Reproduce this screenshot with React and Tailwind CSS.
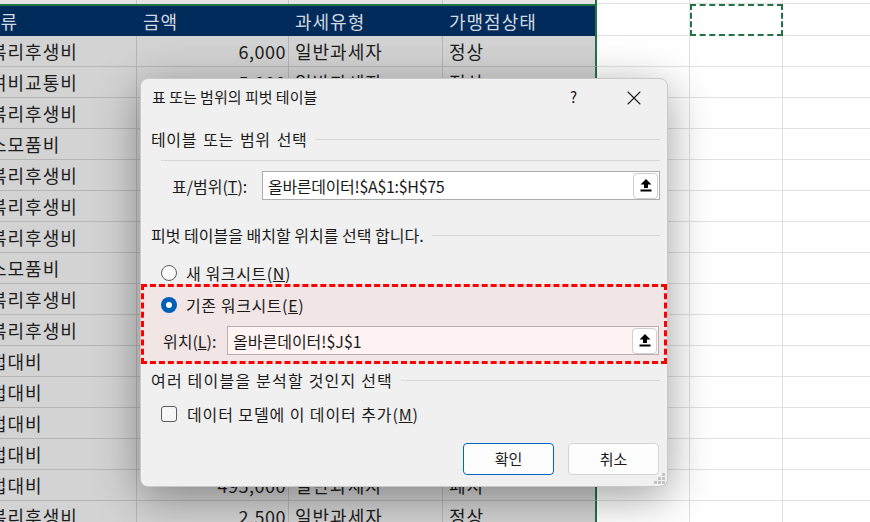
import React from "react";
import { X } from "lucide-react";

const font = "font-['Noto_Sans_CJK_KR','Noto_Sans',sans-serif]";

const rows = [
  ["복리후생비", "6,000", "일반과세자", "정상"],
  ["여비교통비", "5,000", "일반과세자", "정상"],
  ["복리후생비", "12,000", "일반과세자", "정상"],
  ["소모품비", "33,000", "일반과세자", "정상"],
  ["복리후생비", "8,500", "일반과세자", "정상"],
  ["복리후생비", "4,000", "일반과세자", "정상"],
  ["복리후생비", "15,000", "일반과세자", "정상"],
  ["소모품비", "27,500", "일반과세자", "정상"],
  ["복리후생비", "9,000", "일반과세자", "정상"],
  ["복리후생비", "6,500", "일반과세자", "정상"],
  ["접대비", "120,000", "일반과세자", "정상"],
  ["접대비", "88,000", "일반과세자", "정상"],
  ["접대비", "210,000", "일반과세자", "정상"],
  ["접대비", "150,000", "일반과세자", "정상"],
  ["접대비", "495,000", "일반과세자", "폐지"],
  ["복리후생비", "2,500", "일반과세자", "정상"],
];

function BlankCells({ h, dashed }) {
  return (
    <>
      <div className={`w-[93px] shrink-0 border-r border-b border-[#e1e1e1] bg-white ${h}`} />
      <div
        className={`w-[93px] shrink-0 bg-white ${h} ${
          dashed ? "border-2 border-dashed border-[#217346]" : "border-r border-b border-[#e1e1e1]"
        }`}
      />
      <div className={`w-[100px] shrink-0 border-r border-b border-[#e1e1e1] bg-white ${h}`} />
    </>
  );
}

function Sheet() {
  return (
    <div className={`flex flex-col -ml-[30px] text-[18px] tracking-[1px] text-[#1c1c1c] ${font}`}>
      {/* tail of the previous row */}
      <div className="flex h-[4px]">
        <div className="w-[167px] shrink-0 border-r border-[#c4c4c4] bg-[#e4e4e4]" />
        <div className="w-[152px] shrink-0 border-r border-[#c4c4c4] bg-[#e4e4e4]" />
        <div className="w-[154px] shrink-0 border-r border-[#c4c4c4] bg-[#e4e4e4]" />
        <div className="w-[154px] shrink-0 border-r-2 border-[#217346] bg-[#e4e4e4]" />
        <div className="w-[93px] shrink-0 border-r border-b border-[#e1e1e1] bg-white" />
        <div className="w-[93px] shrink-0 border-r border-b border-[#e1e1e1] bg-white" />
        <div className="w-[100px] shrink-0 border-r border-b border-[#e1e1e1] bg-white" />
      </div>
      {/* header */}
      <div className="flex h-[32px]">
        <div className="flex w-[627px] shrink-0 items-center border-t-2 border-r-2 border-[#217346] bg-[#002b5a] text-[#d4d9e1]">
          <div className="w-[167px] shrink-0 pl-[13px]">분류</div>
          <div className="w-[152px] shrink-0 pl-[6px]">금액</div>
          <div className="w-[154px] shrink-0 pl-[6px]">과세유형</div>
          <div className="w-[152px] shrink-0 pl-[6px]">가맹점상태</div>
        </div>
        <BlankCells h="h-[32px]" dashed />
      </div>
      {rows.map((r, i) => (
        <div key={i} className="flex h-[31px]">
          <div className="flex w-[167px] shrink-0 items-center border-r border-b border-[#b6b6b6] bg-[#d3d3d3] pl-[20px] whitespace-nowrap">
            {r[0]}
          </div>
          <div className="flex w-[152px] shrink-0 items-center justify-end border-r border-b border-[#b6b6b6] bg-[#d3d3d3] pr-[2px] tracking-[0.5px]">
            {r[1]}
          </div>
          <div className="flex w-[154px] shrink-0 items-center border-r border-b border-[#b6b6b6] bg-[#d3d3d3] pl-[6px] whitespace-nowrap">
            {r[2]}
          </div>
          <div className="flex w-[154px] shrink-0 items-center border-r-2 border-b border-r-[#217346] border-b-[#b6b6b6] bg-[#d3d3d3] pl-[6px]">
            {r[3]}
          </div>
          <BlankCells h="h-[31px]" />
        </div>
      ))}
    </div>
  );
}

function UploadButton() {
  return (
    <div className="flex h-[26px] w-[25px] items-center justify-center rounded-[4px] border border-[#cfcfcf] bg-white">
      <svg width="12" height="13" viewBox="0 0 12 13">
        <path d="M6 0 L11.5 5.5 L8 5.5 L8 9 L4 9 L4 5.5 L0.5 5.5 Z" fill="#000" />
        <rect x="0.5" y="10.5" width="11" height="2" fill="#000" />
      </svg>
    </div>
  );
}

function SectionHeader({ children, gap = "ml-[8px]" }) {
  return (
    <div className="flex h-[22px] items-center">
      <span className="pl-[10px] whitespace-nowrap">{children}</span>
      <div className={`${gap} h-px flex-1 bg-[#d6d6d6]`} />
    </div>
  );
}

function Radio({ checked }) {
  if (checked) {
    return (
      <div className="flex h-[16px] w-[16px] items-center justify-center rounded-full bg-[#005fb8]">
        <div className="h-[6px] w-[6px] rounded-full bg-white" />
      </div>
    );
  }
  return <div className="h-[16px] w-[16px] rounded-full border border-[#5c5c5c] bg-[#fafafa]" />;
}

function Dialog() {
  return (
    <div
      className={`absolute left-[140px] top-[78px] flex h-[409px] w-[528px] flex-col rounded-[8px] border border-[#c9c9c9] bg-[#f0f0f0] text-[16px] text-[#1a1a1a] shadow-[0_10px_45px_rgba(0,0,0,0.38)] ${font}`}
    >
      {/* title bar */}
      <div className="flex h-[37px] items-center">
        <span className="pl-[11px] text-[15px]">표 또는 범위의 피벗 테이블</span>
        <span className="ml-auto mr-[45px] text-[15px]">?</span>
        <X size={24} strokeWidth={1.1} className="mr-[21px] text-[#1a1a1a]" />
      </div>

      <div className="flex flex-col pr-[7px]">
        <div className="mt-[12px] tracking-[0.6px] [word-spacing:2px]">
          <SectionHeader>테이블 또는 범위 선택</SectionHeader>
        </div>
        <div className="ml-[20px] mt-[10px] h-px bg-[#d6d6d6]" />
        <div className="mt-[10px] flex h-[29px] items-center">
          <span className="w-[121px] pl-[31px] whitespace-nowrap">
            표/범위(<span className="underline">T</span>):
          </span>
          <div className="flex h-[29px] flex-1 items-center border border-[#adadad] bg-white pl-[5px] pr-[1px]">
            <span className="flex-1 tracking-[-0.3px]">올바른데이터!$A$1:$H$75</span>
            <UploadButton />
          </div>
        </div>

        <div className="mt-[24px]">
          <SectionHeader>피벗 테이블을 배치할 위치를 선택 합니다.</SectionHeader>
        </div>
        <div className="mt-[16px] flex h-[22px] items-center gap-[9px] pl-[20px] tracking-[0.6px]">
          <Radio />
          <span>
            새 워크시트(<span className="underline">N</span>)
          </span>
        </div>
      </div>

      {/* highlighted block */}
      <div className="flex flex-col border-[3px] border-dashed border-[#ff0000] bg-[#f2e5e5] pb-[6px] pr-[5px]">
        <div className="mt-[7px] flex h-[22px] items-center gap-[9px] pl-[17px] tracking-[0.6px]">
          <Radio checked />
          <span>
            기존 워크시트(<span className="underline">E</span>)
          </span>
        </div>
        <div className="mt-[10px] flex h-[29px] items-center">
          <span className="w-[83px] pl-[19px] whitespace-nowrap">
            위치(<span className="underline">L</span>):
          </span>
          <div className="flex h-[29px] flex-1 items-center border border-[#b9adad] bg-[#fff3f3] pl-[5px] pr-[1px]">
            <span className="flex-1">올바른데이터!$J$1</span>
            <UploadButton />
          </div>
        </div>
      </div>

      <div className="flex flex-col pr-[7px]">
        <div className="mt-[5px] tracking-[1.2px]">
          <SectionHeader>여러 테이블을 분석할 것인지 선택</SectionHeader>
        </div>
        <div className="mt-[12px] flex h-[22px] items-center gap-[10px] pl-[20px] tracking-[0.9px]">
          <div className="h-[16px] w-[16px] rounded-[3px] border border-[#5c5c5c] bg-[#f7f7f7]" />
          <span>
            데이터 모델에 이 데이터 추가(<span className="underline">M</span>)
          </span>
        </div>
        <div className="mt-[18px] flex justify-end gap-[14px] pr-[1px]">
          <button className="h-[32px] w-[91px] rounded-[4px] border-[1.5px] border-[#0067c0] bg-[#fdfdfd] text-[15px]">
            확인
          </button>
          <button className="h-[32px] w-[91px] rounded-[4px] border border-[#d3d3d3] bg-[#fdfdfd] text-[15px]">
            취소
          </button>
        </div>
      </div>

      {/* resize grip */}
      <svg className="absolute bottom-[2px] right-[2px]" width="11" height="11" viewBox="0 0 11 11">
        <rect x="8" y="0" width="3" height="3" fill="#c4c4c4" />
        <rect x="4" y="4" width="3" height="3" fill="#c4c4c4" />
        <rect x="8" y="4" width="3" height="3" fill="#c4c4c4" />
        <rect x="0" y="8" width="3" height="3" fill="#c4c4c4" />
        <rect x="4" y="8" width="3" height="3" fill="#c4c4c4" />
        <rect x="8" y="8" width="3" height="3" fill="#c4c4c4" />
      </svg>
    </div>
  );
}

export default function App() {
  return (
    <div className="relative h-[522px] w-[870px] overflow-hidden bg-white">
      <Sheet />
      <Dialog />
    </div>
  );
}
